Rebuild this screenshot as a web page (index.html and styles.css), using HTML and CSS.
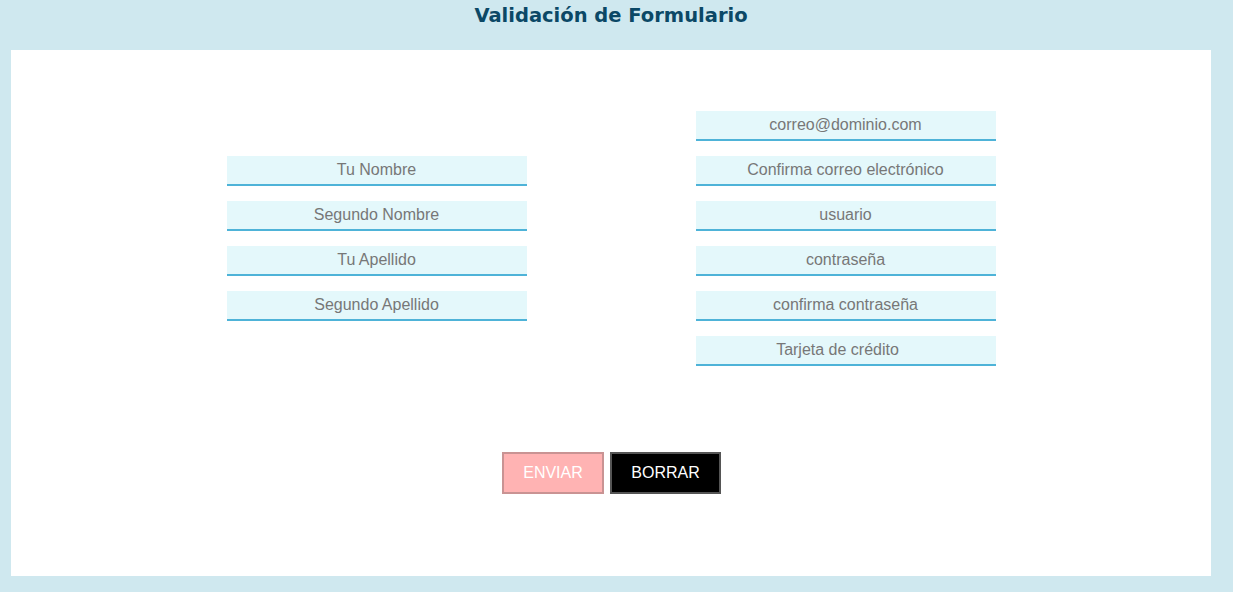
FILE: index.html
```html
<!DOCTYPE html>
<html lang="es">
<head>
<meta charset="utf-8">
<title>Validación de Formulario</title>
<link rel="stylesheet" href="styles.css">
</head>
<body>
<h1 class="title">Validación de Formulario</h1>
<form class="panel">
  <div class="columns">
    <div class="col">
      <input class="field" type="text" placeholder="Tu Nombre">
      <input class="field" type="text" placeholder="Segundo Nombre">
      <input class="field" type="text" placeholder="Tu Apellido">
      <input class="field" type="text" placeholder="Segundo Apellido">
    </div>
    <div class="col">
      <input class="field" type="text" placeholder="correo@dominio.com">
      <input class="field" type="text" placeholder="Confirma correo electrónico">
      <input class="field" type="text" placeholder="usuario">
      <input class="field" type="password" placeholder="contraseña">
      <input class="field" type="password" placeholder="confirma contraseña">
      <input class="field field-number" type="number" placeholder="Tarjeta de crédito">
    </div>
  </div>
  <div class="actions">
    <button class="btn btn-send" type="button">ENVIAR</button>
    <button class="btn btn-clear" type="reset">BORRAR</button>
  </div>
</form>
</body>
</html>
```

FILE: styles.css
```css
html, body {
  margin: 0;
  padding: 0;
}
body {
  background: #cfe8ef;
  font-family: "Liberation Sans", Arial, sans-serif;
  height: 592px;
  overflow: hidden;
}
.title {
  width: 1200px;
  margin: 0 0 18px 11px;
  font-family: "DejaVu Sans", Verdana, sans-serif;
  font-size: 19.5px;
  line-height: 32px;
  font-weight: bold;
  text-align: center;
  color: #0b4866;
}
.panel {
  box-sizing: border-box;
  width: 1200px;
  height: 526px;
  margin-left: 11px;
  background: #ffffff;
  padding-top: 61px;
}
.columns {
  display: flex;
  justify-content: center;
  align-items: center;
  gap: 169px;
}
.col {
  display: flex;
  flex-direction: column;
  gap: 15px;
  width: 300px;
}
.field {
  box-sizing: border-box;
  width: 300px;
  height: 30px;
  margin: 0;
  padding: 0;
  border: 0;
  border-bottom: 2px solid #4eb3d8;
  background: #e4f8fb;
  font-family: "Liberation Sans", Arial, sans-serif;
  font-size: 16px;
  text-align: center;
  color: #555;
  outline: none;
}
.field-number {
  padding-right: 16px;
  -moz-appearance: textfield;
}
.field-number::-webkit-outer-spin-button,
.field-number::-webkit-inner-spin-button {
  -webkit-appearance: none;
  margin: 0;
}
.field::placeholder {
  color: #777;
  opacity: 1;
}
.actions {
  display: flex;
  justify-content: center;
  gap: 6px;
  margin-top: 86px;
  padding-left: 1px;
}
.btn {
  box-sizing: border-box;
  height: 42px;
  padding: 0;
  font-family: "Liberation Sans", Arial, sans-serif;
  font-size: 16px;
  color: #ffffff;
  cursor: pointer;
}
.btn-send {
  width: 102px;
  background: #ffb3b3;
  border: 2px solid #c99393;
}
.btn-clear {
  width: 111px;
  background: #000000;
  border: 2px solid #555555;
}
```
